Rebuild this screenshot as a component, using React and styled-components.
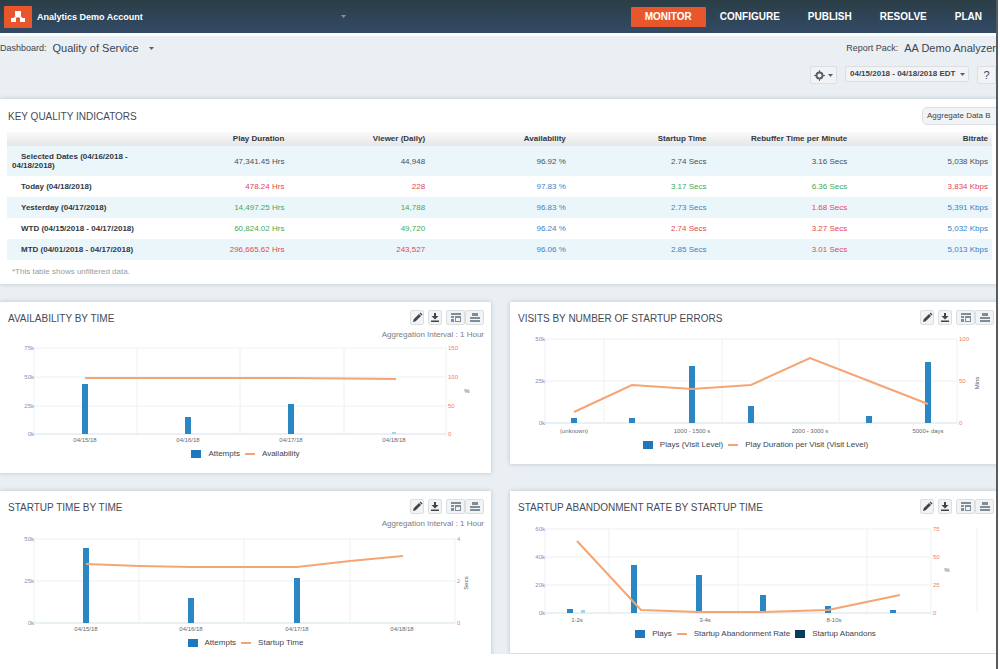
import React from "react";
import styled, { createGlobalStyle, css } from "styled-components";

const colors = {
  orange: "#e8562c",
  line: "#f5a573",
  bar: "#2b87c3",
  red: "#e4474f",
  green: "#3faa58",
  blue: "#3684cb",
  dark: "#49505c",
};

const GlobalStyle = createGlobalStyle`
  * {
    box-sizing: border-box;
  }

  body {
    margin: 0;
    background: #fff;
    font-family: "Liberation Sans", Arial, sans-serif;
    font-size: 8px;
    line-height: 12px;
    color: #3d4450;
  }

  button, select {
    font: inherit;
    color: inherit;
  }
`;

const Shell = styled.div`
  display: flex;
  flex-direction: column;
  height: 100vh;
  margin-right: 2px;
  padding-bottom: 15px;
  border-right: 2px solid #565b60;
`;

const TopBar = styled.header`
  display: flex;
  align-items: center;
  flex-shrink: 0;
  height: 33px;
  padding-left: 4px;
  background: linear-gradient(#2b3e46, #324a66);
`;

const Logo = styled.a`
  display: flex;
  align-items: center;
  justify-content: center;
  width: 28px;
  height: 22px;
  border-radius: 1px;
  background: ${colors.orange};
`;

const Account = styled.div`
  flex: 1;
  display: flex;
  align-items: center;
  padding-left: 5px;
  font-size: 9px;
  font-weight: bold;
  color: #fff;

  svg {
    margin-left: auto;
    margin-right: 48%;
  }
`;

const Nav = styled.nav`
  display: flex;
`;

const NavLink = styled.a`
  padding: 4px 14px;
  border-radius: 1px;
  font-size: 10px;
  font-weight: bold;
  color: #fff;
  text-decoration: none;
  background: ${({ $active }) => ($active ? colors.orange : "transparent")};
`;

const Pane = styled.main`
  flex: 1;
  min-height: 0;
  overflow: hidden;
  border-top: 3px solid #fafcfd;
  background: #e9eff3;
`;

const Row = styled.div`
  display: flex;
  align-items: center;
  justify-content: space-between;
  height: 24px;
`;

const Crumb = styled.div`
  display: flex;
  align-items: center;
  gap: 6px;
  font-size: 9px;
  white-space: nowrap;

  strong {
    font-size: 11px;
    font-weight: normal;
  }

  svg {
    margin-left: 4px;
  }
`;

const Controls = styled.div`
  display: flex;
  justify-content: flex-end;
  gap: 8px;
  padding: 6px 0 15px;
`;

const Button = styled.button`
  display: flex;
  align-items: center;
  justify-content: center;
  gap: 3px;
  height: ${({ $small }) => ($small ? 15 : 18)}px;
  min-width: ${({ $small }) => ($small ? 14 : 19)}px;
  padding: 0 ${({ $small }) => ($small ? 0 : 3)}px;
  border: 1px solid #dcdfe2;
  border-radius: 2px;
  background: #f2f3f4;
  white-space: nowrap;
`;

const DateField = styled.label`
  display: flex;
  align-items: center;
  height: 16px;
  padding-right: 3px;
  border: 1px solid #dcdfe2;
  border-radius: 2px;
  background: #f2f3f4;
`;

const DateSelect = styled.select`
  appearance: none;
  padding: 0 4px;
  border: 0;
  background: transparent;
  font-weight: bold;
`;

// Panels run slightly past the right edge of the pane
const Panels = styled.div`
  display: grid;
  grid-template-columns: repeat(2, minmax(0, 1fr));
  align-items: start;
  gap: 18px 19px;
  width: calc(100% + 5px);
`;

const Card = styled.section`
  padding-bottom: 13px;
  background: #fff;
  border-radius: 1px;
  box-shadow: 0 0 4px rgba(60, 70, 80, 0.25);
  ${({ $wide }) =>
    $wide &&
    css`
      grid-column: 1 / -1;
      padding-bottom: 6px;
    `}
`;

const CardHead = styled.div`
  display: flex;
  align-items: center;
  justify-content: space-between;
  padding: ${({ $wide }) => ($wide ? "8px 0 0 8px" : "8px 7px 0 8px")};
`;

const Title = styled.h2`
  margin: 0;
  padding-top: 2px;
  font-size: 10px;
  font-weight: normal;
  color: #454b58;
`;

const PillButton = styled(Button)`
  justify-content: flex-start;
  width: 79px;
  padding-left: 4px;
  border-radius: 5px 0 0 5px;
`;

const Table = styled.table`
  width: calc(100% - 16px);
  margin: 7px 9px 6px 7px;
  border-collapse: collapse;
  table-layout: fixed;

  th,
  td {
    padding: 0 4px 0 0;
    text-align: right;
    line-height: 9px;
  }

  thead th {
    height: 14px;
    padding-bottom: 1px;
    color: #33373f;
  }

  thead tr {
    background: linear-gradient(#fafafa, #e5e6e7);
  }

  tbody tr {
    height: 21px;
  }

  tbody tr:first-child {
    height: 30px;
  }

  tbody tr:nth-child(odd) {
    background: #ebf6fb;
  }

  tbody th {
    padding: 0 0 0 5px;
    text-align: left;
    text-indent: 9px;
    color: #33373f;
  }
`;

const Value = styled.td`
  color: ${({ $tone }) => colors[$tone]};
`;

const Note = styled.p`
  margin: 0;
  padding-left: 12px;
  color: #9b9b9b;
`;

const Tools = styled.div`
  display: flex;
  gap: 4px;
`;

const ToolGroup = styled.div`
  display: flex;

  button {
    width: 19px;
  }
`;

const Interval = styled.div`
  height: 9px;
  padding-right: 7px;
  text-align: right;
  line-height: 20px;
  color: #777d84;
`;

const Plot = styled.svg`
  display: block;
  width: 100%;
  height: auto;
  overflow: visible;
  font-size: 6px;
`;

const Legend = styled.div`
  display: flex;
  align-items: center;
  justify-content: center;
  gap: 5px;
  margin-top: 2px;
  white-space: nowrap;
`;

const LegendItem = styled.span`
  display: flex;
  align-items: center;
  gap: 7px;

  &::before {
    content: "";
    width: 10px;
    height: ${({ $line }) => ($line ? 2 : 8)}px;
    background: ${({ $color }) => $color};
  }
`;

const indicators = {
  columns: [
    "Play Duration",
    "Viewer (Daily)",
    "Availability",
    "Startup Time",
    "Rebuffer Time per Minute",
    "Bitrate",
  ],
  rows: [
    {
      name: "Selected Dates (04/16/2018 - 04/18/2018)",
      values: ["47,341.45 Hrs", "44,948", "96.92 %", "2.74 Secs", "3.16 Secs", "5,038 Kbps"],
      tones: ["dark", "dark", "dark", "dark", "dark", "dark"],
    },
    {
      name: "Today (04/18/2018)",
      values: ["478.24 Hrs", "228", "97.83 %", "3.17 Secs", "6.36 Secs", "3,834 Kbps"],
      tones: ["red", "red", "blue", "green", "green", "red"],
    },
    {
      name: "Yesterday (04/17/2018)",
      values: ["14,497.25 Hrs", "14,788", "96.83 %", "2.73 Secs", "1.68 Secs", "5,391 Kbps"],
      tones: ["green", "green", "blue", "blue", "red", "blue"],
    },
    {
      name: "WTD (04/15/2018 - 04/17/2018)",
      values: ["60,824.02 Hrs", "49,720", "96.24 %", "2.74 Secs", "3.27 Secs", "5,032 Kbps"],
      tones: ["green", "green", "blue", "red", "red", "blue"],
    },
    {
      name: "MTD (04/01/2018 - 04/17/2018)",
      values: ["296,665.62 Hrs", "243,527", "96.06 %", "2.85 Secs", "3.01 Secs", "5,013 Kbps"],
      tones: ["red", "red", "blue", "blue", "red", "blue"],
    },
  ],
};

const charts = [
  {
    title: "AVAILABILITY BY TIME",
    interval: true,
    left: 34,
    right: 446,
    rows: [6, 35, 64, 92],
    cols: [137, 240, 344],
    yLeft: ["75k", "50k", "25k", "0k"],
    yRight: ["150", "100", "50", "0"],
    unit: "%",
    unitX: 467,
    unitY: 49,
    bars: [[85, 42], [188, 75], [291, 62]],
    faint: [394, 90],
    line: "85,36 188,36 291,36 396,37",
    labels: [[85, "04/15/18"], [188, "04/16/18"], [291, "04/17/18"], [394, "04/18/18"]],
    legend: [["Attempts", "bar"], ["Availability", "line"]],
  },
  {
    title: "VISITS BY NUMBER OF STARTUP ERRORS",
    left: 35,
    right: 447,
    rows: [6, 48, 90],
    cols: [94, 212, 329],
    yLeft: ["50k", "25k", "0k"],
    yRight: ["100", "50", "0"],
    unit: "Mins",
    unitX: 469,
    unitY: 48,
    bars: [[64, 85], [122, 85], [182, 33], [241, 73], [359, 83], [418, 29]],
    line: "64,79 122,52 182,56 241,52 300,25 359,48 418,71",
    labels: [[64, "(unknown)"], [182, "1000 - 1500 s"], [300, "2000 - 3000 s"], [418, "5000+ days"]],
    legend: [["Plays (Visit Level)", "bar"], ["Play Duration per Visit (Visit Level)", "line"]],
  },
  {
    title: "STARTUP TIME BY TIME",
    interval: true,
    left: 34,
    right: 455,
    rows: [8, 50, 92],
    cols: [139, 244, 350],
    yLeft: ["50k", "25k", "0k"],
    yRight: ["4", "2", "0"],
    unit: "Secs",
    unitX: 468,
    unitY: 50,
    bars: [[86, 17], [191, 67], [297, 47]],
    line: "86,33 139,35 191,36 297,36 350,30 403,25",
    labels: [[86, "04/15/18"], [191, "04/16/18"], [297, "04/17/18"], [402, "04/18/18"]],
    legend: [["Attempts", "bar"], ["Startup Time", "line"]],
  },
  {
    title: "STARTUP ABANDONMENT RATE BY STARTUP TIME",
    left: 35,
    right: 421,
    rows: [7, 35, 63, 91],
    cols: [99, 228, 357],
    edge: 467,
    yLeft: ["60k", "40k", "20k", "0k"],
    yRight: ["75", "50", "25", "0"],
    unit: "%",
    unitX: 437,
    unitY: 48,
    bars: [[60, 87], [124, 43], [189, 53], [253, 73], [318, 84], [383, 88]],
    faint: [73, 88],
    line: "67,19 131,88 189,90 253,90 318,88 390,73",
    labels: [[67, "1-2s"], [195, "3-4s"], [324, "8-10s"]],
    legend: [["Plays", "bar"], ["Startup Abandonment Rate", "line"], ["Startup Abandons", "navy"]],
  },
];

const legendColors = { bar: "#1f78bd", line: colors.line, navy: "#083b5c" };

function Caret({ color = "#59616c" }) {
  return (
    <svg width="5" height="3" viewBox="0 0 5 3">
      <path d="M0 0h5L2.5 3z" fill={color} />
    </svg>
  );
}

function ToolIcon({ name }) {
  return (
    <svg width="12" height="11" viewBox="0 0 12 11" fill="#3f454b">
      {name === "edit" && <path d="M2 10l.7-2.7L8 2l2 2-5.3 5.2zM8.6 1.4l.9-.9 2 2-.9.9z" />}
      {name === "download" && <path d="M5 1h2v3h2.5L6 7.5 2.5 4H5zM2 8.5h8V10H2z" />}
      {name === "table" && (
        <path d="M1 1h10v2H1zM1 4h3v2H1zM1 7h3v3H1zM5 4h6v6H5zM6 6v3h4V6z" fill="#7e8d9a" fillRule="evenodd" />
      )}
      {name === "list" && <path d="M3 1h6v3H3zM1 5h10v2H1zM1 8h10v2H1z" fill="#7e8d9a" />}
    </svg>
  );
}

function ChartCard({ chart }) {
  const { left, right, rows, cols, edge, faint } = chart;
  const base = rows[rows.length - 1];
  const vertical = chart.unit !== "%";

  return (
    <Card>
      <CardHead>
        <Title>{chart.title}</Title>
        <Tools>
          <Button $small aria-label="Edit"><ToolIcon name="edit" /></Button>
          <Button $small aria-label="Download"><ToolIcon name="download" /></Button>
          <ToolGroup>
            <Button $small aria-label="Chart view"><ToolIcon name="table" /></Button>
            <Button $small aria-label="Table view"><ToolIcon name="list" /></Button>
          </ToolGroup>
        </Tools>
      </CardHead>
      {chart.interval && <Interval>Aggregation Interval : 1 Hour</Interval>}
      <Plot viewBox="0 -8 491 112" role="img" aria-label={chart.title}>
        <g stroke="#edf0f2">
          {rows.map((y) => (
            <line key={y} x1={left} x2={right} y1={y} y2={y} stroke={y === base ? "#d5e2eb" : undefined} />
          ))}
          {[left, ...cols, right].map((x) => (
            <line key={x} x1={x} x2={x} y1={rows[0]} y2={base + 2} />
          ))}
          {edge && <line x1={edge} x2={edge} y1={rows[0]} y2={base} />}
        </g>
        {chart.bars.map(([x, y]) => (
          <rect key={x} x={x - 3} y={y} width="6" height={base - y} fill={colors.bar} />
        ))}
        {faint && <rect x={faint[0] - 2} y={faint[1]} width="4" height={base - faint[1]} fill="#a9d3ec" />}
        <polyline points={chart.line} fill="none" stroke={colors.line} strokeWidth="2" />
        {rows.map((y, i) => (
          <g key={y}>
            <text x={left} y={y + 2} textAnchor="end" fill="#7f8fba">{chart.yLeft[i]}</text>
            <text x={right + 2} y={y + 2} fill="#f0805f">{chart.yRight[i]}</text>
          </g>
        ))}
        {chart.labels.map(([x, label]) => (
          <text key={x} x={x} y="100" textAnchor="middle" fill="#666b70">{label}</text>
        ))}
        <text
          textAnchor="middle"
          fill="#525a70"
          transform={`translate(${chart.unitX} ${chart.unitY + 2})${vertical ? " rotate(-90)" : ""}`}
        >
          {chart.unit}
        </text>
      </Plot>
      <Legend>
        {chart.legend.map(([label, kind]) => (
          <LegendItem key={label} $color={legendColors[kind]} $line={kind === "line"}>
            {label}
          </LegendItem>
        ))}
      </Legend>
    </Card>
  );
}

function Indicators() {
  return (
    <Card $wide>
      <CardHead $wide>
        <Title>KEY QUALITY INDICATORS</Title>
        <PillButton>Aggregate Data B</PillButton>
      </CardHead>
      <Table>
        <thead>
          <tr>
            <th aria-label="Period" />
            {indicators.columns.map((name) => (
              <th key={name} scope="col">{name}</th>
            ))}
          </tr>
        </thead>
        <tbody>
          {indicators.rows.map((row) => (
            <tr key={row.name}>
              <th scope="row">{row.name}</th>
              {row.values.map((value, i) => (
                <Value key={indicators.columns[i]} $tone={row.tones[i]}>{value}</Value>
              ))}
            </tr>
          ))}
        </tbody>
      </Table>
      <Note>*This table shows unfiltered data.</Note>
    </Card>
  );
}

export default function App() {
  return (
    <>
      <GlobalStyle />
      <Shell>
        <TopBar>
          <Logo href="#" aria-label="Home">
            <svg width="16" height="13" viewBox="0 0 16 13" fill="#fff">
              <path d="M5 1h6v5H5zM1 8h5v4H1zM10 8h5v4h-5zM4 7l4-2 4 2v2L8 7 4 9z" />
            </svg>
          </Logo>
          <Account>
            Analytics Demo Account
            <Caret color="#8594a3" />
          </Account>
          <Nav>
            {["MONITOR", "CONFIGURE", "PUBLISH", "RESOLVE", "PLAN"].map((name, i) => (
              <NavLink key={name} href="#" $active={i === 0}>{name}</NavLink>
            ))}
          </Nav>
        </TopBar>
        <Pane>
          <Row>
            <Crumb>
              Dashboard: <strong>Quality of Service</strong>
              <Caret />
            </Crumb>
            <Crumb>
              Report Pack: <strong>AA Demo Analyzer</strong>
            </Crumb>
          </Row>
          <Controls>
            <Button aria-label="Settings">
              <svg width="11" height="11" viewBox="0 0 11 11" fill="none" stroke="#59616c">
                <circle cx="5.5" cy="5.5" r="3" strokeWidth="2" />
                <path d="M5.5 0v11M0 5.5h11" strokeDasharray="2 7" />
              </svg>
              <Caret />
            </Button>
            <DateField>
              <DateSelect aria-label="Date range">
                <option>04/15/2018 - 04/18/2018 EDT</option>
              </DateSelect>
              <Caret />
            </DateField>
            <Button aria-label="Help"><Crumb><strong>?</strong></Crumb></Button>
          </Controls>
          <Panels>
            <Indicators />
            {charts.map((chart) => (
              <ChartCard key={chart.title} chart={chart} />
            ))}
          </Panels>
        </Pane>
      </Shell>
    </>
  );
}
